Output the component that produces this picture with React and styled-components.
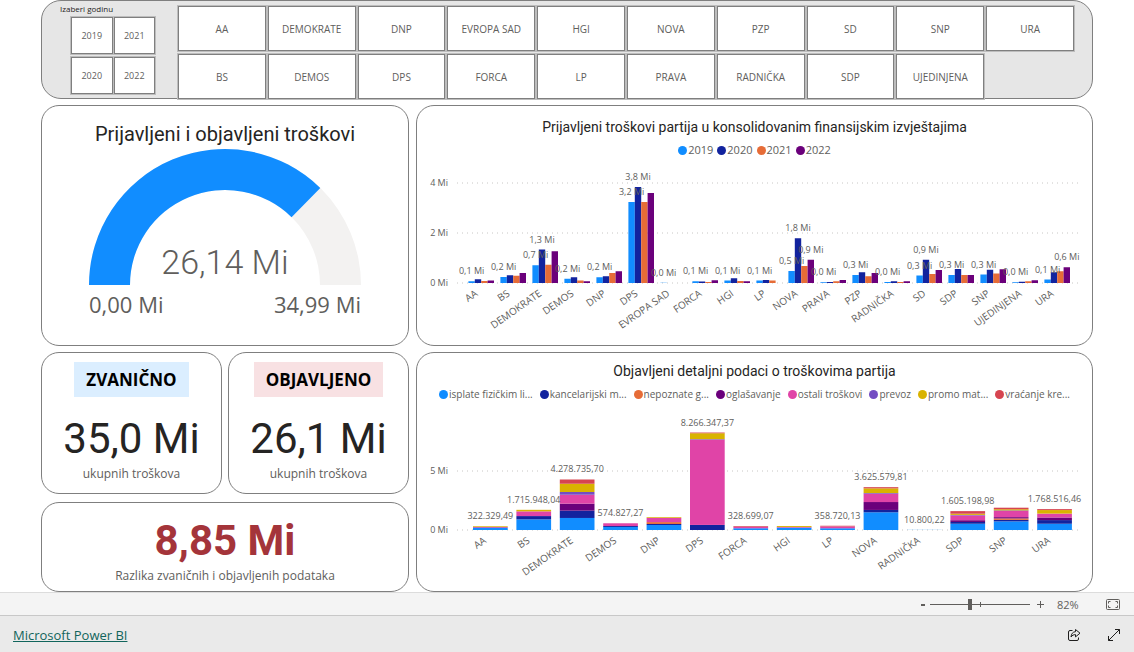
import { useState } from "react";
import styled, { createGlobalStyle } from "styled-components";

const years = ["2019", "2021", "2020", "2022"];

const parties = [
  "AA", "DEMOKRATE", "DNP", "EVROPA SAD", "HGI", "NOVA", "PZP", "SD", "SNP", "URA",
  "BS", "DEMOS", "DPS", "FORCA", "LP", "PRAVA", "RADNIČKA", "SDP", "UJEDINJENA",
];

const yearSeries = [
  { name: "2019", color: "#118dff" },
  { name: "2020", color: "#12239e" },
  { name: "2021", color: "#e66c37" },
  { name: "2022", color: "#6b007b" },
];

const costSeries = [
  { name: "isplate fizičkim li...", color: "#118dff" },
  { name: "kancelarijski m...", color: "#12239e" },
  { name: "nepoznate g...", color: "#e66c37" },
  { name: "oglašavanje", color: "#6b007b" },
  { name: "ostali troškovi", color: "#e044a7" },
  { name: "prevoz", color: "#744ec2" },
  { name: "promo mat...", color: "#d9b300" },
  { name: "vraćanje kre...", color: "#d64550" },
];

// values in millions, "show" lists the series that get a data label
const reported = [
  { name: "AA", values: [0.07, 0.15, 0.08, 0.1], show: [0] },
  { name: "BS", values: [0.24, 0.31, 0.29, 0.4], show: [0] },
  { name: "DEMOKRATE", values: [0.71, 1.34, 0.73, 1.27], show: [0, 1] },
  { name: "DEMOS", values: [0.17, 0.23, 0.1, 0.07], show: [0] },
  { name: "DNP", values: [0.23, 0.27, 0.4, 0.47], show: [0] },
  { name: "DPS", values: [3.24, 3.84, 3.24, 3.6], show: [0, 1] },
  { name: "EVROPA SAD", values: [0.01, 0, 0, 0], show: [0] },
  { name: "FORCA", values: [0.07, 0.06, 0.04, 0.11], show: [0] },
  { name: "HGI", values: [0.1, 0.19, 0.08, 0.07], show: [0] },
  { name: "LP", values: [0.1, 0.12, 0.1, 0], show: [0] },
  { name: "NOVA", values: [0.48, 1.79, 0.68, 0.93], show: [0, 1, 3] },
  { name: "PRAVA", values: [0.03, 0.04, 0.07, 0.12], show: [0] },
  { name: "PZP", values: [0.32, 0.43, 0.27, 0.4], show: [0] },
  { name: "RADNIČKA", values: [0.04, 0.07, 0.04, 0.07], show: [0] },
  { name: "SD", values: [0.3, 0.93, 0.36, 0.52], show: [0, 1] },
  { name: "SDP", values: [0.32, 0.56, 0.32, 0.32], show: [0] },
  { name: "SNP", values: [0.34, 0.53, 0.38, 0.55], show: [0] },
  { name: "UJEDINJENA", values: [0.03, 0.05, 0.07, 0.11], show: [0] },
  { name: "URA", values: [0.14, 0.43, 0.47, 0.63], show: [0, 3] },
];

const published = [
  { name: "AA", total: "322.329,49", values: [0.17, 0.04, 0, 0, 0.05, 0, 0.06, 0] },
  { name: "BS", total: "1.715.948,04", values: [0.9, 0.28, 0, 0, 0.4, 0, 0.13, 0] },
  { name: "DEMOKRATE", total: "4.278.735,70", values: [1.02, 0.62, 0, 0.59, 0.76, 0.23, 0.7, 0.36] },
  { name: "DEMOS", total: "574.827,27", values: [0.26, 0.08, 0, 0, 0.23, 0, 0, 0] },
  { name: "DNP", values: [0.42, 0.09, 0.16, 0, 0.36, 0, 0.06, 0] },
  { name: "DPS", total: "8.266.347,37", values: [0, 0.43, 0, 0, 7.22, 0.05, 0.5, 0.06] },
  { name: "FORCA", total: "328.699,07", values: [0.15, 0, 0, 0, 0.12, 0, 0, 0.06] },
  { name: "HGI", values: [0.2, 0, 0, 0, 0.06, 0, 0.08, 0] },
  { name: "LP", total: "358.720,13", values: [0.15, 0, 0, 0, 0.15, 0, 0, 0.06] },
  { name: "NOVA", total: "3.625.579,81", values: [1.5, 0.2, 0, 0.67, 0.7, 0.06, 0.4, 0.1] },
  { name: "RADNIČKA", total: "10.800,22", values: [0.01, 0, 0, 0, 0, 0, 0, 0] },
  { name: "SDP", total: "1.605.198,98", values: [0.53, 0.15, 0, 0.15, 0.4, 0.05, 0.1, 0.22] },
  { name: "SNP", values: [0.73, 0.13, 0.12, 0.11, 0.52, 0.05, 0.1, 0.13] },
  { name: "URA", total: "1.768.516,46", values: [0.53, 0.31, 0, 0.22, 0.33, 0, 0.3, 0.08] },
];

const GlobalStyle = createGlobalStyle`
  * {
    box-sizing: border-box;
  }
  body {
    margin: 0;
    background: #fff;
    color: #605e5c;
    font-family: "Open Sans", "Noto Sans", sans-serif;
  }
  button {
    font-family: inherit;
    color: inherit;
    cursor: pointer;
  }
`;

const Report = styled.main`
  display: flex;
  flex-direction: column;
  gap: 6px;
  padding: 0 41px;
`;

const Slicers = styled.section`
  display: flex;
  align-items: flex-start;
  gap: 23px;
  padding-right: 18px;
  padding-left: 18px;
  background: #e6e6e6;
  border: 1px solid #7f7f7f;
  border-radius: 20px;
`;

const YearSlicer = styled.fieldset`
  margin: 0;
  padding: 2px 0 0;
  border: 0;
  width: 95px;
`;

const YearLegend = styled.legend`
  float: left;
  width: 100%;
  padding: 0;
  color: #252423;
  font-size: 8px;
  line-height: 12px;
`;

const YearGrid = styled.div`
  display: grid;
  grid-template-columns: 1fr 1fr;
  gap: 3px 1px;
  width: 100%;
  padding: 2px 0 0 11px;
`;

/* the last row sits on the panel's bottom border */
const PartyGrid = styled.div`
  flex: 1;
  display: grid;
  grid-template-columns: repeat(10, 1fr);
  gap: 3px 2px;
  margin-bottom: -1px;
  padding-top: 5px;
`;

const Tile = styled.button`
  height: ${(props) => (props.$small ? "37px" : "45px")};
  padding: 0;
  background: #fff;
  border: 1px solid #7f7f7f;
  box-shadow: 0 0 0 1px #bdbdbd;
  font-size: ${(props) => (props.$small ? "9px" : "10px")};
`;

const Columns = styled.div`
  display: grid;
  grid-template-columns: 368fr 677fr;
  gap: 6px 7px;
`;

const Card = styled.section`
  display: flex;
  flex-direction: column;
  align-items: center;
  min-width: 0;
  padding-top: ${(props) => props.$top || "8px"};
  border: 1px solid #7f7f7f;
  border-radius: 18px;
`;

const Title = styled.h2`
  margin: 0;
  color: #252423;
  font-family: Roboto, sans-serif;
  font-weight: 400;
  font-size: ${(props) => (props.$large ? "20px" : "14px")};
  line-height: 20px;
`;

const Drawing = styled.svg`
  display: block;
  width: 100%;
  height: auto;
`;

const Legend = styled.ul`
  display: flex;
  gap: ${(props) => (props.$small ? "7px" : "4px")};
  margin: 5px 0 0;
  padding: 0;
  list-style: none;
  font-size: ${(props) => (props.$small ? "10px" : "11px")};
  line-height: 16px;
  white-space: nowrap;
`;

const LegendItem = styled.li`
  display: flex;
  align-items: center;
  gap: 1px;

  &::before {
    content: "";
    width: 9px;
    height: 9px;
    border-radius: 50%;
    background: ${(props) => props.$color};
  }
`;

const ChartText = styled.text`
  fill: #605e5c;
  font-size: ${(props) => props.$size || "9px"};
  text-anchor: ${(props) => props.$anchor || "middle"};
`;

const Callout = styled(ChartText)`
  font-family: Roboto, sans-serif;
  font-weight: 300;
`;

const GridLine = styled.line`
  stroke: #c8c6c4;
  stroke-dasharray: 1 4;
`;

const Totals = styled.div`
  display: grid;
  grid-template-columns: 1fr 1fr;
  grid-template-rows: 142px 1fr;
  gap: 8px 6px;
`;

const Difference = styled(Card)`
  grid-column: 1 / -1;
`;

const Badge = styled.h2`
  margin: 0;
  padding: 4px 12px;
  background: ${(props) => props.$color};
  color: #000;
  font-weight: 700;
  font-size: 17px;
  line-height: 27px;
`;

const Figure = styled.p`
  margin: ${(props) => (props.$alert ? "0" : "18px 0 0")};
  color: ${(props) => (props.$alert ? "#a4343a" : "#252423")};
  font-family: Roboto, sans-serif;
  font-weight: ${(props) => (props.$alert ? 700 : 400)};
  font-size: 42px;
  line-height: 48px;
`;

const Note = styled.p`
  margin: 2px 0 0;
  font-size: 12px;
  line-height: 18px;
`;

const ZoomBar = styled.div`
  display: flex;
  align-items: center;
  justify-content: flex-end;
  height: 24px;
  padding-right: 12px;
  background: #f4f4f4;
  border-top: 1px solid #dcdcdc;
  border-bottom: 1px solid #c8c8c8;
  font-size: 12px;
`;

const IconButton = styled.button`
  display: flex;
  align-items: center;
  justify-content: center;
  width: ${(props) => props.$width || "16px"};
  height: 16px;
  padding: 0;
  border: 0;
  background: none;
`;

const Slider = styled.input`
  appearance: none;
  width: 100px;
  height: 12px;
  margin: 0 2px;
  background:
    linear-gradient(#605e5c, #605e5c) center / 100% 1px no-repeat,
    linear-gradient(#605e5c, #605e5c) center / 1px 5px no-repeat;

  &::-webkit-slider-thumb {
    appearance: none;
    width: 4px;
    height: 11px;
    background: #605e5c;
  }
`;

const Percent = styled.output`
  width: 25px;
  margin: 0 22px 0 9px;
  font-size: 11px;
`;

const Footer = styled.footer`
  display: flex;
  align-items: center;
  gap: 24px;
  padding: 10px 12px 8px 13px;
  background: #eaeaea;
`;

const BrandLink = styled.a`
  margin-right: auto;
  color: #11655c;
  font-weight: 500;
  font-size: 13px;
  line-height: 18px;
`;

const GAUGE = { cx: 183, cy: 141, outer: 136, inner: 95 };

function gaugeArc(from, to) {
  const { cx, cy, outer, inner } = GAUGE;
  const point = (r, part) => {
    const a = Math.PI * (1 - part);
    return `${cx + r * Math.cos(a)} ${cy - r * Math.sin(a)}`;
  };
  return `M${point(outer, from)} A${outer} ${outer} 0 0 1 ${point(outer, to)}
    L${point(inner, to)} A${inner} ${inner} 0 0 0 ${point(inner, from)}Z`;
}

const Gauge = () => {
  const share = 26.14 / 34.99;
  return (
    <Drawing viewBox="0 0 366 200">
      <path d={gaugeArc(0, 1)} fill="#f3f2f1" />
      <path d={gaugeArc(0, share)} fill="#118dff" />
      <Callout x="183" y="130" $size="34px">26,14 Mi</Callout>
      <ChartText x="47" y="169" $size="22px" $anchor="start">0,00 Mi</ChartText>
      <ChartText x="319" y="169" $size="22px" $anchor="end">34,99 Mi</ChartText>
    </Drawing>
  );
};

const Axis = ({ ticks, scale, base }) =>
  ticks.map((tick) => (
    <g key={tick}>
      <GridLine x1="40" x2="662" y1={base - tick * scale} y2={base - tick * scale} />
      <ChartText x="31" y={base - tick * scale + 3} $anchor="end">{tick} Mi</ChartText>
    </g>
  ));

const Category = ({ x, y, children }) => (
  <ChartText $anchor="end" $size="10px" transform={`translate(${x} ${y}) rotate(-35)`}>
    {children}
  </ChartText>
);

const ReportedChart = () => {
  const base = 125;
  const scale = 25;
  const pitch = 32;
  const bar = 6.4;
  const left = (i) => 51.4 + i * pitch;
  return (
    <Drawing viewBox="0 0 675 187">
      <Axis ticks={[0, 2, 4]} scale={scale} base={base} />
      {reported.map((party, i) =>
        party.values.map((v, s) => (
          <rect
            key={party.name + s}
            x={left(i) + s * bar}
            y={base - v * scale}
            width={bar}
            height={v * scale}
            fill={yearSeries[s].color}
          />
        ))
      )}
      {reported.map((party, i) => (
        <g key={party.name}>
          {party.show.map((s) => (
            <ChartText key={s} x={left(i) + (s + 0.5) * bar} y={base - party.values[s] * scale - 7}>
              {party.values[s].toFixed(1).replace(".", ",")} Mi
            </ChartText>
          ))}
          <Category x={left(i) + 10} y={base + 12}>{party.name}</Category>
        </g>
      ))}
    </Drawing>
  );
};

const PublishedChart = () => {
  const base = 128;
  const scale = 11.8;
  const pitch = 43.4;
  const bar = 34.7;
  const left = (i) => 56 + i * pitch;
  const sum = (values) => values.reduce((a, b) => a + b, 0);
  return (
    <Drawing viewBox="0 0 675 189">
      <Axis ticks={[0, 5]} scale={scale} base={base} />
      {published.map((party, i) =>
        party.values.map((v, s) => (
          <rect
            key={party.name + s}
            x={left(i)}
            y={base - sum(party.values.slice(0, s + 1)) * scale}
            width={bar}
            height={v * scale}
            fill={costSeries[s].color}
          />
        ))
      )}
      {published.map((party, i) => (
        <g key={party.name}>
          {party.total && (
            <ChartText x={left(i) + bar / 2} y={base - sum(party.values) * scale - 7}>
              {party.total}
            </ChartText>
          )}
          <Category x={left(i) + 14} y={base + 12}>{party.name}</Category>
        </g>
      ))}
    </Drawing>
  );
};

const SeriesLegend = ({ series, small }) => (
  <Legend $small={small}>
    {series.map((s) => (
      <LegendItem key={s.name} $color={s.color}>{s.name}</LegendItem>
    ))}
  </Legend>
);

const App = () => {
  const [zoom, setZoom] = useState(82);

  return (
    <>
      <GlobalStyle />
      <Report>
        <Slicers>
          <YearSlicer>
            <YearLegend>Izaberi godinu</YearLegend>
            <YearGrid>
              {years.map((year) => (
                <Tile key={year} type="button" $small>{year}</Tile>
              ))}
            </YearGrid>
          </YearSlicer>
          <PartyGrid>
            {parties.map((party) => (
              <Tile key={party} type="button">{party}</Tile>
            ))}
          </PartyGrid>
        </Slicers>

        <Columns>
          <Card $top="18px">
            <Title $large>Prijavljeni i objavljeni troškovi</Title>
            <Gauge />
          </Card>
          <Card $top="11px">
            <Title>Prijavljeni troškovi partija u konsolidovanim finansijskim izvještajima</Title>
            <SeriesLegend series={yearSeries} />
            <ReportedChart />
          </Card>
          <Totals>
            <Card $top="9px">
              <Badge $color="#dbeeff">ZVANIČNO</Badge>
              <Figure>35,0 Mi</Figure>
              <Note>ukupnih troškova</Note>
            </Card>
            <Card $top="9px">
              <Badge $color="#f8e1e3">OBJAVLJENO</Badge>
              <Figure>26,1 Mi</Figure>
              <Note>ukupnih troškova</Note>
            </Card>
            <Difference $top="14px">
              <Figure $alert>8,85 Mi</Figure>
              <Note>Razlika zvaničnih i objavljenih podataka</Note>
            </Difference>
          </Totals>
          <Card>
            <Title>Objavljeni detaljni podaci o troškovima partija</Title>
            <SeriesLegend series={costSeries} small />
            <PublishedChart />
          </Card>
        </Columns>
      </Report>

      <ZoomBar>
        <IconButton type="button" aria-label="Zoom out" $width="10px" onClick={() => setZoom(zoom - 10)}>
          <svg width="6" height="9" viewBox="0 0 6 9">
            <path d="M1 5h4" stroke="#605e5c" strokeWidth="2" />
          </svg>
        </IconButton>
        <Slider
          type="range"
          aria-label="Zoom"
          min="10"
          max="190"
          value={zoom}
          onChange={(e) => setZoom(Number(e.target.value))}
        />
        <IconButton type="button" aria-label="Zoom in" onClick={() => setZoom(zoom + 10)}>
          <svg width="9" height="9" viewBox="0 0 9 9">
            <path d="M1 4.5h7M4.5 1v7" stroke="#605e5c" />
          </svg>
        </IconButton>
        <Percent>{zoom}%</Percent>
        <IconButton type="button" aria-label="Fit to page" $width="18px">
          <svg width="14" height="11" viewBox="0 0 14 11" fill="none" stroke="#605e5c">
            <rect x="0.5" y="0.5" width="13" height="10" rx="1" />
            <path d="M4.5 2.5h-2v2M9.5 2.5h2v2M2.5 6.5v2h2M11.5 6.5v2h-2" />
          </svg>
        </IconButton>
      </ZoomBar>

      <Footer>
        <BrandLink href="#powerbi">Microsoft Power BI</BrandLink>
        <IconButton type="button" aria-label="Share">
          <svg width="14" height="14" viewBox="0 0 14 14" fill="none" stroke="#201f1e" strokeLinejoin="round">
            <path d="M5.5 2.5H3A1.5 1.5 0 0 0 1.5 4v7A1.5 1.5 0 0 0 3 12.500h7a1.5 1.5 0 0 0 1.5-1.500V9.500" />
            <path d="M8.500 1.500v2.200C5.800 3.800 4.300 5.800 4 9c1.200-1.700 2.600-2.400 4.500-2.400v2.300L13 5.200z" />
          </svg>
        </IconButton>
        <IconButton type="button" aria-label="Full screen">
          <svg width="14" height="14" viewBox="0 0 14 14" fill="none" stroke="#201f1e">
            <path d="M1.500 12.500l11-11M8 1.500h4.500V6M1.500 8v4.500H6" />
          </svg>
        </IconButton>
      </Footer>
    </>
  );
};

export default App;
